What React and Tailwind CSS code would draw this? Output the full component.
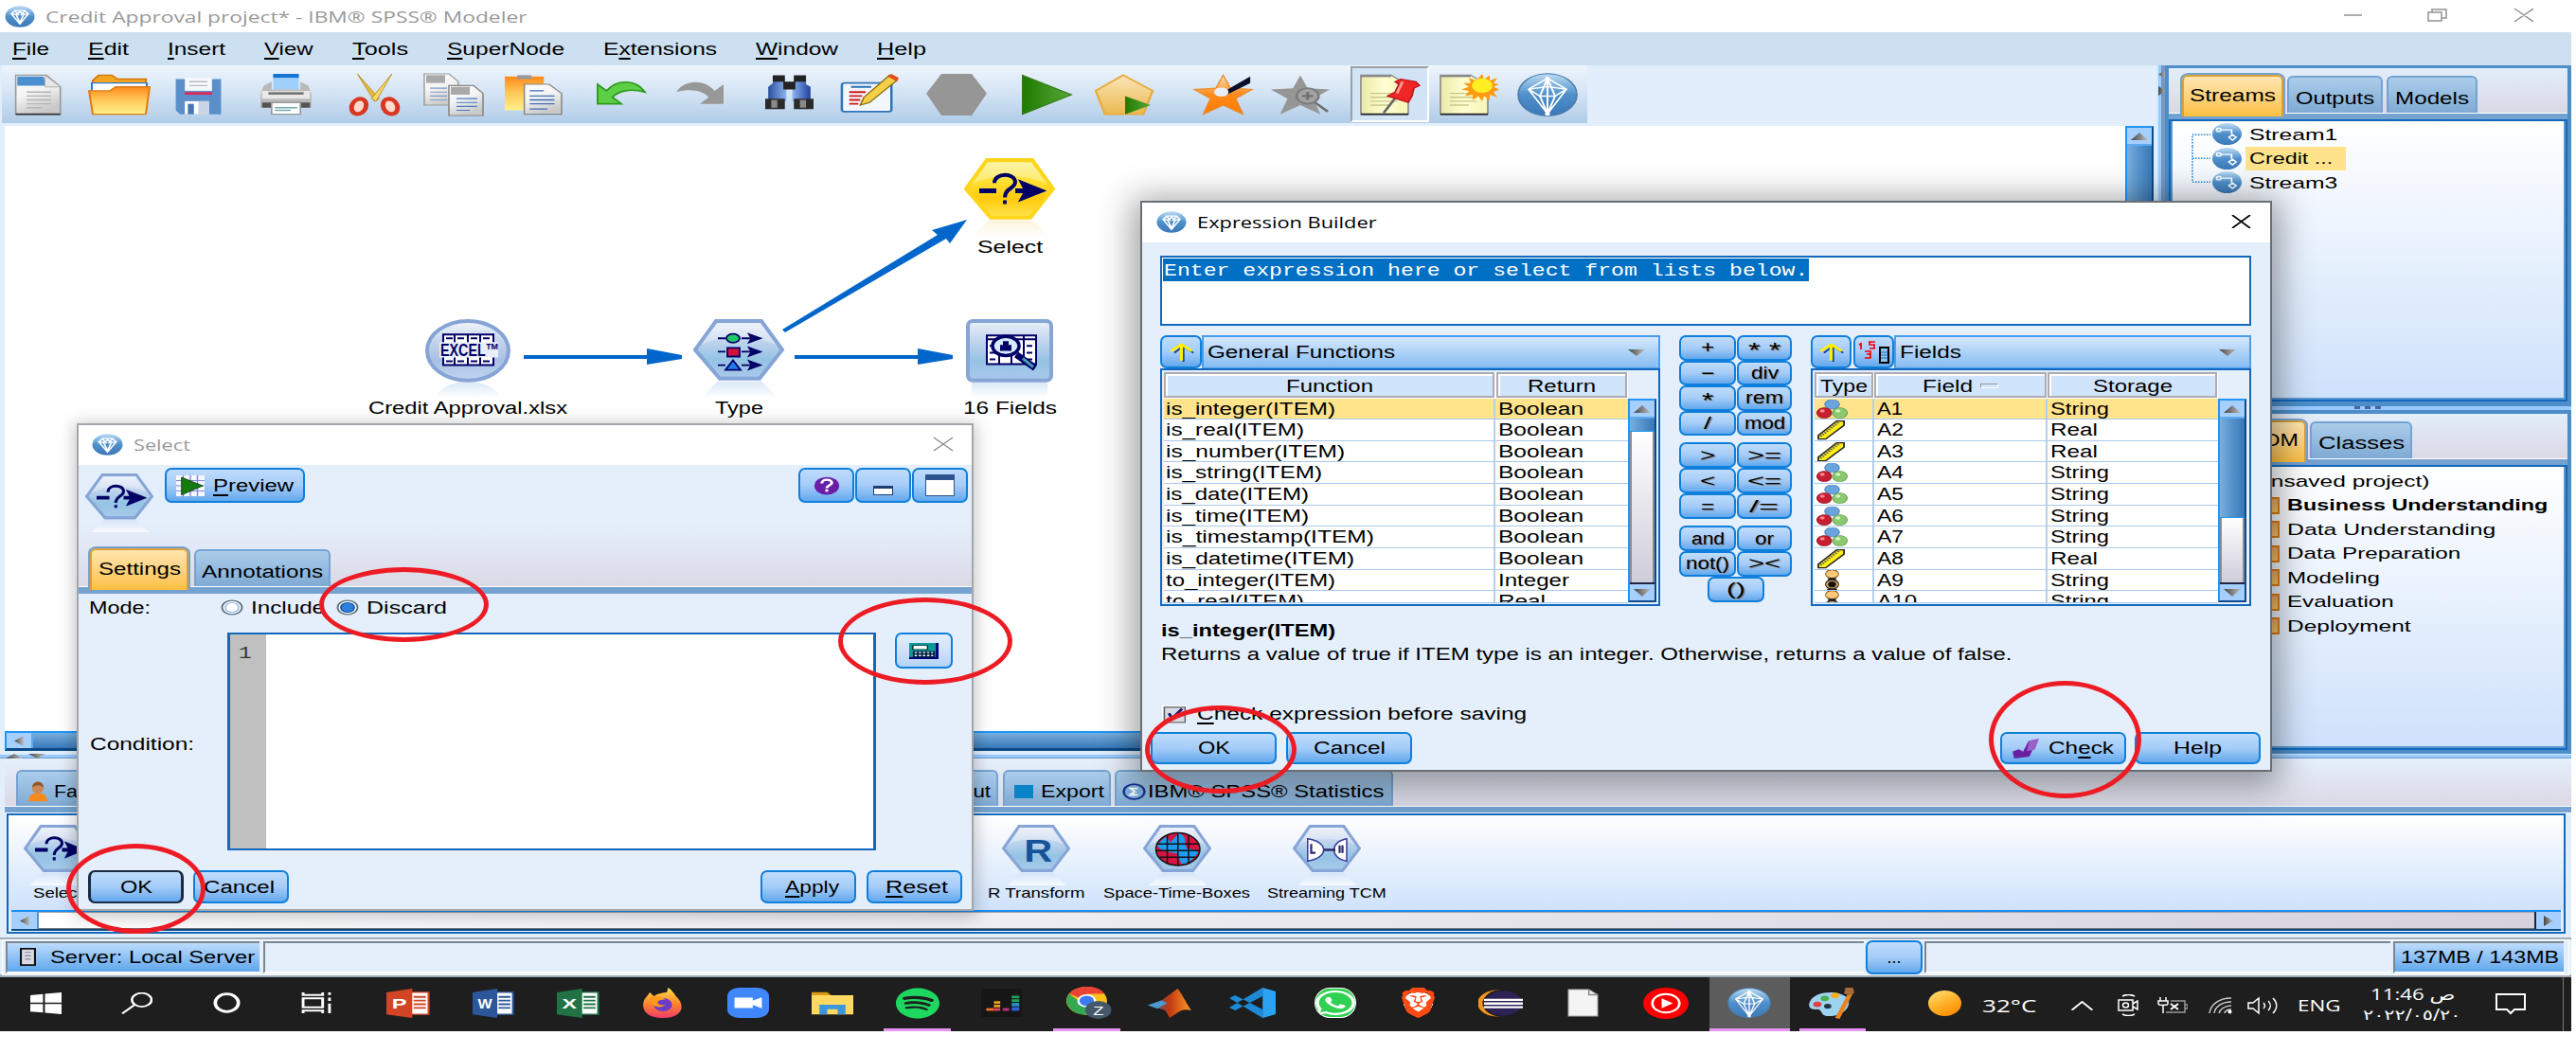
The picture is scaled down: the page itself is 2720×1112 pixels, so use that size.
import React, { useLayoutEffect, useRef } from "react";
import { FaSpotify, FaWhatsapp } from "react-icons/fa";
import { SiBrave } from "react-icons/si";

const UI = "font-['Liberation_Sans',Arial,sans-serif] text-[18px] ";
const BTN =
  "flex items-center justify-center border-2 border-[#0f7fdc] rounded-[7px] bg-gradient-to-b from-[#bfdcfc] via-[#a5ccf8] to-[#62a8ed] ";

/* Text stretched horizontally to a fixed width. */
function T({ w, className = "", children }) {
  const ref = useRef(null);
  useLayoutEffect(() => {
    const el = ref.current;
    el.style.transform = `scaleX(${w / el.offsetWidth})`;
  });
  return (
    <span className={"block shrink-0 leading-none " + className} style={{ width: w }}>
      <span ref={ref} className="inline-block origin-left whitespace-nowrap leading-none">
        {children}
      </span>
    </span>
  );
}

const U = ({ children }) => <span className="underline underline-offset-[3px] decoration-[1.5px]">{children}</span>;

function Pic({ className = "", vb = "0 0 32 32", children, style }) {
  return (
    <svg viewBox={vb} preserveAspectRatio="none" className={"block shrink-0 " + className} style={style}>
      {children}
    </svg>
  );
}

function Defs() {
  const G = ({ id, stops, x2 = 0, y2 = 1 }) => (
    <linearGradient id={id} x1="0" y1="0" x2={x2} y2={y2}>
      {stops.map((s, i) => (
        <stop key={i} offset={i / (stops.length - 1)} stopColor={s} />
      ))}
    </linearGradient>
  );
  return (
    <svg className="absolute h-0 w-0">
      <defs>
        <G id="node" stops={["#e9f0fa", "#c3d5ee", "#94c3e4", "#a9c8ea"]} />
        <G id="excel" stops={["#f4f7fc", "#c5d4eb", "#a8c0e4", "#c2d6f2"]} />
        <G id="gold" stops={["#f6f08a", "#ffe33a", "#ffc90c", "#ffe450"]} />
        <G id="refl" stops={["#cfe2f6", "#ffffff"]} />
        <G id="reflY" stops={["#fdf0cf", "#ffffff"]} />
        <G id="folder" stops={["#ff8a1c", "#ffc95c", "#fff08a"]} />
        <G id="page" stops={["#ffffff", "#f4f4f4", "#c9c9c9"]} x2={0.4} />
        <G id="green" stops={["#1f7a00", "#58a838"]} x2={1} y2={0} />
        <G id="penta" stops={["#fbe5b8", "#eab84e"]} />
        <G id="star" stops={["#ffe2bd", "#ff8a1a", "#ff7b05"]} />
        <G id="ball" stops={["#bcdcf4", "#4f90cb", "#3c78b8"]} />
        <G id="bino" stops={["#2d4f9c", "#9cc4ff", "#20429a"]} x2={1} y2={0} />
        <G id="note" stops={["#e9e9a8", "#ffffd2", "#f5f5b5"]} x2={1} y2={0} />
        <G id="sun" stops={["#ffe680", "#ffb833", "#ff8f00"]} x2={0.6} />
        <G id="fox" stops={["#ffe14d", "#ff8a2a", "#f03a6a"]} />
        <G id="mat" stops={["#2a5a8a", "#c23a12", "#ff9a2a"]} x2={1} y2={0} />
        <G id="tri" stops={["#444444", "#bdbdbd"]} x2={1} y2={0} />
      </defs>
    </svg>
  );
}

/* ---------- logos ---------- */
const Logo = ({ className }) => (
  <Pic className={className}>
    <ellipse cx="16" cy="16" rx="15.5" ry="15.5" fill="url(#ball)" />
    <g fill="none" stroke="#fff" strokeWidth="1.7">
      <path d="M7 12 11 7h10l4 5-9 15zM7 12l5 1 4 12 4-12 5-1M11 8l4 6M21 8l-4 6M12 13l4-4 4 4" />
    </g>
  </Pic>
);
const Diamond = ({ className }) => (
  <Pic className={className}>
    <ellipse cx="16" cy="16" rx="15.5" ry="15.5" fill="url(#ball)" stroke="#4a7cab" strokeWidth=".8" />
    <g fill="none" stroke="#fff" strokeWidth="1">
      <path d="M16 3v28M6 12 16 4l10 8-10 18zM6 12l6 5 4 13 4-13 6-5M12 17h8l-4-13zM6 12l10-2 10 2" />
    </g>
    <circle cx="16" cy="4" r="1.3" fill="#fff" />
    <circle cx="16" cy="30" r="1.3" fill="#fff" />
  </Pic>
);

/* ---------- toolbar ---------- */
const Page = ({ x = 0, y = 0, s = 1, head = "#4a8fd0" }) => (
  <g transform={`translate(${x} ${y}) scale(${s})`}>
    <path d="M1 1h20l9 9v21H1z" fill="url(#page)" stroke="#999" strokeWidth="1" />
    <path d="M2 2h17l2 7H2z" fill={head} />
    <path d="M20 1v9h10z" fill="#e8e8e8" stroke="#aaa" strokeWidth=".6" />
    <path d="M8 14h16M8 17h16M8 20h16M8 23h16M8 26h10" stroke="#b5b5b5" strokeWidth="1" />
    <path d="M1 31h29" stroke="#333" strokeWidth="1.2" />
  </g>
);
const STAR = "M16 1l4 10 12 1-9 7 4 12-11-7-11 7 4-12-9-7 12-1z";

const tools = [
  [15, 52, <Page key="p" />],
  [27, 64, <g key="o"><path d="M2 5 5 1h7l3 3h15v26H2z" fill="#f5a520" stroke="#d27708" /><path d="M1.500 7h29v10H1.500z" fill="#fff" stroke="#2a7bd0" /><path d="M0 13h11l3-3h18l-2 21H2z" fill="url(#folder)" stroke="#e07b10" /></g>],
  [26, 51, <g key="s"><path d="M1 4h30v27H4L1 28z" fill="#5a8fca" /><path d="M7 3h18v10H7z" fill="#f4f8ff" /><path d="M7 14h18v2H7z" fill="#e02858" /><path d="M10 6h12M10 9h12" stroke="#bbb" /><path d="M7 21h16v10H7z" fill="#fff" /><path d="M9 23h4v8H9z" fill="#4676b4" /><path d="M16 21h7v10h-7z" fill="#c9d4e4" /></g>],
  [40, 54, <g key="pr"><path d="M8 0h16v12H8z" fill="#9fd0fb" /><path d="M8 0h16v3H8z" fill="#1673d2" /><path d="M2 9l5-3v6h18V6l5 3 2 7v10H0V16z" fill="#b9b9b9" /><path d="M1 13h30v6H1z" fill="#e8e8e8" /><path d="M5 14h22v2H5z" fill="#777" /><path d="M1 22h30v4H1z" fill="#555" /><path d="M7 22h18v9H7z" fill="#fff" stroke="#999" /><path d="M9 26h14M9 28h10" stroke="#7aa" /></g>],
  [40, 53, <g key="c"><path d="M5 0 19 19l-3 2Z" fill="#e9b93c" stroke="#b58a1c" strokeWidth=".6" /><path d="M27 0 14 19l3 2Z" fill="#f8d96a" stroke="#b58a1c" strokeWidth=".6" /><ellipse cx="6" cy="25" rx="4.500" ry="6" transform="rotate(20 6 25)" fill="#ffd9d0" stroke="#d8361e" strokeWidth="3" /><ellipse cx="26" cy="25" rx="4.500" ry="6" transform="rotate(-20 26 25)" fill="#ffd9d0" stroke="#d8361e" strokeWidth="3" /></g>],
  [26, 64, <g key="cp"><path d="M0 0h13l5 6v18H0z" fill="url(#page)" stroke="#999" strokeWidth=".7" /><path d="M1 1h10v6H1z" fill="#a9a9a9" /><path d="M3 11h9M3 14h9M3 17h9M3 20h9" stroke="#7c9cc8" strokeWidth=".9" /><path d="M13 9h13l5 6v17H13z" fill="url(#page)" stroke="#888" strokeWidth=".8" /><path d="M14 10h10v6H14z" fill="#a9a9a9" /><path d="M17 19h11M17 22h11M17 25h11M17 28h7" stroke="#4a7cc4" strokeWidth=".9" /></g>],
  [21, 60, <g key="pa"><path d="M0 2h22v26H0z" fill="url(#folder)" /><path d="M7 1h8v3H7z" fill="#999" /><path d="M11 8h14l7 7v16H11z" fill="url(#page)" stroke="#888" strokeWidth=".8" /><path d="M14 13h8M14 17h14M14 20h14M14 23h14M14 27h10" stroke="#3f6fb8" strokeWidth="1" /></g>],
  [38, 50, <path key="u" d="M0 8v15h16l-6-5c4-5 12-7 22-4C26 4 13 4 6 13z" fill="#5ccf45" stroke="#2b9a1e" strokeWidth="1.200" />],
  [33, 50, <path key="r" d="M32 8v15H16l6-5c-4-5-12-7-22-4C6 4 19 4 26 13z" fill="#989898" />],
  [44, 51, <g key="b"><path d="M5 2h8v6l1 1v12H2V10l3-3zM19 2h8v6l3 2v11H18V9l1-1z" fill="url(#bino)" /><path d="M5 1h8v5H5zM19 1h8v5h-8zM12 6h8v6h-8z" fill="#222" /><path d="M0 19h13v8H0zM19 19h13v8H19z" fill="#2b2b2b" /><path d="M4 20h4v6H4zM23 20h4v6h-4z" fill="#8a8a8a" /></g>],
  [28, 62, <g key="e"><rect x="1" y="7" width="27" height="22" rx="1.500" fill="#f2f7fd" stroke="#2f74b8" strokeWidth="1.300" /><path d="M6 10h11" stroke="#2f74b8" strokeWidth="1.500" /><path d="M5 14h9M5 17h7M5 20h6M5 23h5" stroke="#d01818" strokeWidth="1.300" /><path d="M27 1l4 4-15 17-5 2 2-6z" fill="#f4d048" stroke="#8a6a10" strokeWidth=".8" /><path d="M26 2l2-2 4 3-1 3z" fill="#e0501c" /></g>],
  [29, 64, <path key="h" d="M8 0h16l8 15-8 17H8L0 15z" fill="#969696" />],
  [36, 55, <path key="pl" d="M1 1 31 16 1 31z" fill="url(#green)" stroke="#2d7a12" strokeWidth=".8" />],
  [24, 62, <g key="pe"><path d="M15 1 31 13 26 31H5L0 13z" fill="url(#penta)" stroke="#e8ab3c" strokeWidth="1.200" /><path d="M16 17 30 24 16 31z" fill="url(#green)" /></g>],
  [42, 61, <g key="sb"><path d={STAR} fill="url(#star)" stroke="#ea8c2a" strokeWidth=".8" /><path d="M31 2v5L18 16l-2-2z" fill="#0a0d2c" /><ellipse cx="15" cy="14" rx="4" ry="3.500" fill="#e8eef5" /></g>],
  [20, 62, <g key="sg"><path d={STAR} fill="#969696" /><circle cx="20" cy="17" r="6" fill="#a2a2a2" stroke="#7c7c7c" strokeWidth="1.300" /><path d="M17 17h6M20 14v6M24 22l7 7" stroke="#707070" strokeWidth="1.600" /></g>],
];
const Note = () => (
  <g>
    <path d="M1 1h16l9 8v22H1z" fill="url(#note)" stroke="#888" strokeWidth=".8" />
    <path d="M1 1h16v1.500H1z" fill="#888" />
    <path d="M6 15h14M6 18h14M6 21h14M6 24h10" stroke="#c9c78a" />
    <path d="M1 31h25" stroke="#222" strokeWidth="1.300" />
  </g>
);
const Tool = ({ gap, w, children }) => (
  <div className="h-[44px] shrink-0" style={{ marginLeft: gap, width: w }}>
    <Pic className="h-full w-full overflow-visible">{children}</Pic>
  </div>
);

function Toolbar() {
  return (
    <div className="flex h-[61px] items-center w-[1674px] ml-[2px] bg-gradient-to-b from-[#eef5fd] via-[#d3e3f4] to-[#b0cce8]">
      {tools.map(([g, w, el], i) => (
        <Tool key={i} gap={i ? g : g - 2} w={w}>
          {el}
        </Tool>
      ))}
      <div className="ml-[22px] flex h-[59px] w-[83px] items-center border-2 border-l-[#9a9fa8] border-t-[#9a9fa8] border-b-white border-r-white bg-[#d2e3f6]">
        <Tool gap={7} w={64}>
          <Note />
          <path d="M13 30 20 17" stroke="#666" strokeWidth="1.500" />
          <path d="M22 4l8 2 2 3-3 2-1 6-2 5-11-5 4-3 2-6-2-2z" fill="#ef2626" stroke="#b81414" strokeWidth=".8" />
          <path d="M23 6l-3 9" stroke="#ff9a9a" strokeWidth="1.500" />
        </Tool>
      </div>
      <Tool gap={10} w={64}>
        <Note />
        <path d="M23 0l1 4 3-3v4l4-2-2 4 3 1-3 2 3 2-3 2 2 4-4-2v4l-3-3-1 4-2-4-3 3 0-4-4 1 2-4-4-1 4-2-3-3 4 0-1-4 4 2z" fill="#ff9a12" />
        <circle cx="23" cy="9" r="5.500" fill="#ffee22" />
      </Tool>
      <Diamond className="ml-[19px] h-[46px] w-[64px]" />
    </div>
  );
}

/* ---------- shared parts ---------- */
const Tri = ({ d = "up", className = "" }) => (
  <Pic className={"h-[8px] w-[18px] " + className} vb="0 0 10 10">
    <path d={{ up: "M0 10 5 0 10 10z", down: "M0 0 5 10 10 0z", left: "M10 0 0 5 10 10z", right: "M0 0 10 5 0 10z" }[d]} fill="url(#tri)" />
  </Pic>
);

const SB = "flex shrink-0 items-center justify-center bg-[#a5cfff] ";
const VScroll = ({ thumb, className = "" }) => (
  <div className={"flex flex-col border-2 border-t-[#2196f8] border-l-[#2196f8] border-r-[#0b4a86] border-b-[#0b4a86] " + className}>
    <div className={SB + "h-[19px] border-b-2 border-[#5fa8f2]"}><Tri /></div>
    <div className="shrink-0 border-b border-[#2196f8] bg-gradient-to-r from-[#78b0de] via-[#5592cb] to-[#3878b8]" style={{ height: thumb }} />
    <div className="flex-1 border-x-2 border-[#8c8c96] bg-gradient-to-b from-white to-[#cfccda]" />
    <div className={SB + "h-[19px] border-t-2 border-[#222244]"}><Tri d="down" /></div>
  </div>
);

const Tab = ({ w, tw, on, h = 39, className = "", children }) => (
  <div
    className={
      UI + "z-10 flex shrink-0 items-center justify-center rounded-t-[6px] border-2 border-b-0 " +
      (on ? "relative top-[4px] border-[#d9a036] bg-gradient-to-b from-[#ffe6b0] to-[#fcbf3c] pb-[3px] shadow-[0_-2px_0_0_#74a3d1,2px_-1px_0_0_#74a3d1,-2px_-1px_0_0_#74a3d1] " : "border-[#74a3d1] bg-gradient-to-b from-[#abcdeb] to-[#7faad4] pt-[6px] ") +
      className
    }
    style={{ width: w, height: h }}
  >
    <T w={tw}>{children}</T>
  </div>
);

const SideTabs = ({ children }) => (
  <>
    <div className="flex h-[47px] items-end gap-[4px] bg-gradient-to-b from-[#e2eefa] to-[#dad9e5] pl-[14px]">{children}</div>
    <div className="h-[7px] border-t border-white bg-[#74a3d1]" />
  </>
);

const StreamIcon = () => (
  <Pic className="h-[23px] w-[31px]">
    <ellipse cx="16" cy="16" rx="16" ry="16" fill="url(#ball)" />
    <path d="M8 10h13v6M22 17l4 4-4 4-4-4z" fill="none" stroke="#fff" strokeWidth="1.800" />
    <circle cx="7" cy="10" r="2.500" fill="#8fc0e8" stroke="#fff" strokeWidth="1.500" />
  </Pic>
);

function Hex({ gold, className, children, refl = true }) {
  return (
    <Pic className={className} vb="0 0 96 82">
      {refl && <path d="M26 65h46l18 17H8z" fill={gold ? "url(#reflY)" : "url(#refl)"} opacity=".8" />}
      <path d="M24 2h48l22 30-24 30H28L2 32z" fill={gold ? "url(#gold)" : "url(#node)"} stroke={gold ? "#ffd51c" : "#86a5d6"} strokeWidth="4" />
      <path d="M25 5h46l17 22C66 16 30 16 8 27z" fill="#fff" opacity=".3" />
      {children}
    </Pic>
  );
}
const SelectGlyph = () => (
  <g stroke="#000066" fill="none">
    <path d="M16 34h18M54 34h26" strokeWidth="5" />
    <path d="M58 23 86 34 58 45l6-11z" fill="#000066" strokeWidth="1" />
    <path d="M32 26c0-11 22-11 22-1 0 7-11 6-11 16M43 44v4" strokeWidth="4" />
  </g>
);

/* ---------- stream canvas ---------- */
function Node({ x, y, label, lw, children }) {
  return (
    <div className={UI + "absolute flex w-[240px] flex-col items-center gap-[2px]"} style={{ left: x - 120, top: y }}>
      {children}
      <T w={lw}>{label}</T>
    </div>
  );
}

function Canvas() {
  return (
    <div className="relative h-full w-[2239px] overflow-hidden bg-white">
      <svg className="absolute left-0 top-0 h-[400px] w-[1200px]" viewBox="5 133 1200 400">
        <g fill="#0066cc">
          <path d="M553 375h130v-7l37 7v4l-37 6v-6H553zM839 375h130v-7l37 7v4l-37 6v-6H839z" />
          <path d="M826 348 990 248l-6-5 37-11-18 25-4-5L829 351z" />
        </g>
      </svg>
      <Node x={1061} y={34} label="Select" lw={69}>
        <Hex gold className="h-[83px] w-[96px]"><SelectGlyph /></Hex>
      </Node>
      <Node x={489} y={204} label="Credit Approval.xlsx" lw={210}>
        <Pic className="h-[83px] w-[90px]" vb="0 0 90 82">
          <path d="M12 82C16 60 74 60 78 82z" fill="url(#refl)" opacity=".8" />
          <ellipse cx="45" cy="33" rx="43" ry="31" fill="url(#excel)" stroke="#86a5d6" strokeWidth="4" />
          <path d="M19 16h53v32H19z" fill="#fff" stroke="#000066" strokeWidth="2" />
          <path d="M31 16v32M45 16v32M58 16v32M22 20h7M34 20h7M48 20h7M61 20h7M22 44h7M34 44h7M48 44h7M61 44h7" stroke="#000066" strokeWidth="2" />
          <rect x="15" y="24" width="62" height="16" fill="#e9effa" />
          <text x="16" y="39" textLength="62" lengthAdjust="spacingAndGlyphs" fontFamily="Liberation Sans" fontWeight="700" fontSize="19" fill="#000066">EXCEL™</text>
        </Pic>
      </Node>
      <Node x={775} y={204} label="Type" lw={51}>
        <Hex className="h-[83px] w-[96px]">
          <g stroke="#000066" strokeWidth="1.800">
            <path d="M26 20h8M51 20h14M26 34h8M51 34h14M26 48h8M51 48h14" />
            <path d="M58 15 72 20 58 25l3-5zM58 29l14 5-14 5 3-5zM58 43l14 5-14 5 3-5z" fill="#000066" strokeWidth="1" />
            <ellipse cx="42" cy="20" rx="7" ry="4.500" fill="#21c96a" />
            <path d="M36 30h13v9H36z" fill="#d4103c" />
            <path d="M42 43l8 10H34z" fill="#1d7cf0" />
          </g>
        </Hex>
      </Node>
      <Node x={1061} y={204} label="16 Fields" lw={99}>
        <Pic className="h-[83px] w-[92px]" vb="0 0 92 82">
          <path d="M6 66h80v16H6z" fill="url(#refl)" opacity=".8" />
          <rect x="2" y="2" width="88" height="62" rx="5" fill="url(#node)" stroke="#86a5d6" strokeWidth="4" />
          <path d="M22 17h52v30H22z" fill="#fff" stroke="#000066" strokeWidth="2" />
          <path d="M22 21h52M35 17v30M61 17v30M48 17v30M25 28h6M25 35h6M25 42h6M64 28h6M64 35h6M64 42h6" stroke="#000066" strokeWidth="2" />
          <ellipse cx="42" cy="28" rx="14" ry="10" fill="#d6ecfa" stroke="#000066" strokeWidth="3.500" />
          <path d="M36 33v-6h3v-4h6v4h3v6z" fill="#000066" />
          <path d="M53 37 73 51" stroke="#000066" strokeWidth="7" />
          <path d="M60 41 71 50" stroke="#4a9ab8" strokeWidth="3" />
        </Pic>
      </Node>
    </div>
  );
}

function SideTree() {
  return (
    <div className={UI + "flex h-[298px] flex-col border-2 border-[#1268bd]"}>
      <div className="flex flex-1 flex-col border-x-2 border-b-2 border-[#5a96cf] bg-gradient-to-b from-white to-[#cfe2fb] pt-[1px]">
        {[["Stream1", 93], ["Credit ...", 88], ["Stream3", 93]].map(([l, w], i) => (
          <div key={l} className="flex h-[25.500px] shrink-0 items-center">
            <Pic className="ml-[20px] h-full w-[22px]" vb="0 0 22 25">
              <path d={i === 0 ? "M1 25V13H20" : i === 1 ? "M1 0V25M1 12H20" : "M1 0V12H20"} fill="none" stroke="#2080e0" strokeWidth="1.500" strokeDasharray="1.500 1.500" />
            </Pic>
            <StreamIcon />
            <div className={"ml-[4px] flex h-full items-center pl-[4px] pt-[1px] " + (i === 1 ? "w-[106px] bg-[#ffe38c]" : "")}>
              <T w={w} className="text-[17px]">{l}</T>
            </div>
          </div>
        ))}
      </div>
    </div>
  );
}

const phases = [["Business Understanding", 275], ["Data Understanding", 220], ["Data Preparation", 184], ["Modeling", 98], ["Evaluation", 112], ["Deployment", 131]];

function SideColumn() {
  return (
    <div className="flex w-[429px] flex-col bg-[#4d8ec9]">
      <div className="h-[360px] px-[4px] pt-[3px]">
        <SideTabs>
          <Tab on w={107} tw={91} h={44}>Streams</Tab>
          <Tab w={101} tw={83}>Outputs</Tab>
          <Tab w={96} tw={78}>Models</Tab>
        </SideTabs>
        <SideTree />
      </div>
      <div className="flex h-[4px] items-center justify-center gap-[5px] bg-[#99c9ff] pr-[2px]">
        <i className="h-[3px] w-[6px] bg-[#47639f]" /><i className="h-[3px] w-[6px] bg-[#47639f]" /><i className="h-[3px] w-[6px] bg-[#47639f]" />
      </div>
      <div className="h-[363px] px-[4px] pt-[4px]">
        <SideTabs>
          <Tab on w={131} tw={115} h={44}>CRISP-DM</Tab>
          <Tab w={108} tw={91}>Classes</Tab>
        </SideTabs>
        <div className={UI + "flex h-[301px] flex-col border-2 border-[#1268bd]"}>
          <div className="flex-1 border-x-2 border-b-2 border-[#5a96cf] bg-gradient-to-b from-white to-[#cfe2fb] pt-[3px]">
            <div className="flex h-[25.500px] items-center pl-[82px]"><T w={189} className="text-[17px]">(unsaved project)</T></div>
            {phases.map(([l, w], i) => (
              <div key={l} className="flex h-[25.500px] items-center pl-[84px]">
                <div className="h-[18px] w-[29px] border-2 border-[#e07a12] bg-gradient-to-b from-[#e9a868] to-[#f8c860]" />
                <T w={w} className={"ml-[8px] text-[17px] " + (i === 0 ? "font-bold" : "")}>{l}</T>
              </div>
            ))}
          </div>
        </div>
      </div>
      <div className="h-px bg-[#4d8ec9]" />
    </div>
  );
}

/* ---------- bottom palette ---------- */
const PTab = ({ w, className = "", children }) => (
  <div className={"flex h-[38px] shrink-0 items-center rounded-t-[6px] border-2 border-b-0 border-[#74a3d1] bg-gradient-to-b from-[#abcdeb] to-[#7faad4] pt-[5px] " + className} style={{ width: w }}>
    {children}
  </div>
);
const PItem = ({ w, lw, label, ml, children }) => (
  <div className="flex shrink-0 flex-col items-center" style={{ width: w, marginLeft: ml }}>
    <Hex className="h-[64px] w-[72px]">{children}</Hex>
    <T w={lw} className="text-[15px]">{label}</T>
  </div>
);

function Palette() {
  return (
    <div className={UI + "bg-[#e2eefb]"}>
      <div className="flex h-[5px] items-center gap-[6px] border-t border-b border-t-[#d5ecff] border-b-[#6f9fd0] bg-[#99c9ff] pl-[6px]">
        <Tri className="!h-[5px]" /><Tri d="down" className="!h-[5px]" />
      </div>
      <div className="ml-[5px] flex h-[50px] items-end bg-gradient-to-b from-[#e6f0fb] to-[#dad9e5] pl-[12px]">
        <PTab w={130} className="pl-[9px]">
          <Pic className="h-[22px] w-[24px]">
            <path d="M3 31c0-10 5-13 13-13s13 3 13 13z" fill="#f58a1c" /><ellipse cx="16" cy="10" rx="8" ry="9.500" fill="#c98a58" /><path d="M8 10c0-12 16-12 16 0-4-5-12-5-16 0z" fill="#8a5a2c" />
          </Pic>
          <T w={88} className="ml-[5px]">Favorites</T>
        </PTab>
        <div className="w-[787px]" />
        <PTab w={120} className="justify-end pr-[6px]"><T w={67}>Output</T></PTab>
        <PTab w={114} className="ml-[5px] pl-[10px]"><i className="mr-[8px] h-[14px] w-[20px] bg-[#0a84c8]" /><T w={67}>Export</T></PTab>
        <PTab w={294} className="ml-[4px] pl-[6px]">
          <Pic className="h-[18px] w-[25px]"><circle cx="16" cy="16" r="14" fill="#7fb4e2" stroke="#1a2f8c" strokeWidth="3" /><path d="M21 10H11l6 6-6 6h10" fill="none" stroke="#fff" strokeWidth="3" /></Pic>
          <T w={250} className="ml-[2px]">IBM® SPSS® Statistics</T>
        </PTab>
      </div>
      <div className="ml-[5px] h-[8px] border-b border-t border-white bg-[#74a3d1]" />
      <div className="ml-[7px] mr-[6px] border-2 border-[#1268bd]">
        <div className="flex h-[100px] items-start bg-gradient-to-b from-white to-[#cfe2fb] pt-[10px]">
          <PItem w={72} ml={16} lw={52} label="Select"><SelectGlyph /></PItem>
          <PItem w={104} ml={945} lw={103} label="R Transform">
            <text x="31" y="50" textLength="40" lengthAdjust="spacingAndGlyphs" fontFamily="Liberation Sans" fontWeight="700" fontSize="42" fill="#16549a">R</text>
          </PItem>
          <PItem w={155} ml={19} lw={155} label="Space-Time-Boxes">
            <ellipse cx="49" cy="33" rx="31" ry="22" fill="#d41442" stroke="#111" strokeWidth="2" />
            <path d="M50 12c14 4 6 12 12 20l16 3c-4 10-14 18-24 18l-6-14-20-4-8-6c3-6 8-11 14-13l4 8z" fill="#1b9cf0" />
            <path d="M20 26h58M18 35h62M24 44h50M34 14v38M49 12v42M64 14v38" stroke="#111" strokeWidth="2" fill="none" />
          </PItem>
          <PItem w={126} ml={18} lw={126} label="Streaming TCM">
            <path d="M21 19c30 4 30 26 0 30zM76 19c-24 4-24 26 0 30z" fill="#fff" stroke="#3a3aa0" strokeWidth="2" />
            <path d="M44 34h16M26 26v12h6M66 28v10M70 28v10" stroke="#2a2a6a" strokeWidth="3" fill="none" />
          </PItem>
        </div>
        <div className="mx-[3px] flex h-[22px] items-stretch border-b-2 border-t-2 border-b-[#0b4a86] border-t-[#1a8ef7]">
          <div className={SB + "w-[29px] border-r-2 border-[#5a90c8]"}><Tri d="left" className="!h-[11px] !w-[10px]" /></div>
          <div className="flex-1 border-b border-t border-b-[#777] border-t-[#a9a9b0] bg-gradient-to-r from-white to-[#d5d2de]" />
          <div className={SB + "w-[28px] border-l-2 border-[#222244]"}><Tri d="right" className="!h-[11px] !w-[10px]" /></div>
        </div>
        <div className="h-px bg-white" />
      </div>
      <div className="h-[4px]" />
    </div>
  );
}

function StatusBar() {
  const CELL = "flex h-[34px] items-center border-l-2 border-t-2 border-[#7d8690] border-b-2 border-b-white ";
  return (
    <div className={UI + "flex h-[42px] items-center border-b-[3px] border-t-2 border-[#a0abb6] bg-[#e4effb] px-[6px] outline outline-1 -outline-offset-[3px] outline-white"}>
      <div className={CELL + "w-[268px] bg-gradient-to-b from-[#bddcfd] to-[#5fa6ec]"}>
        <Pic className="ml-[13px] h-[19px] w-[17px]"><path d="M2 1h28v30H2z" fill="#dcdce8" stroke="#111" strokeWidth="4" /><path d="M10 8h12M10 14h12M10 20h12" stroke="#888" strokeWidth="2" /></Pic>
        <T w={216} className="ml-[15px]">Server: Local Server</T>
      </div>
      <div className={CELL + "ml-[4px] w-[1690px]"} />
      <div className={BTN + "ml-[2px] h-[36px] w-[60px]"}><T w={15}>...</T></div>
      <div className={CELL + "ml-[2px] w-[492px]"} />
      <div className={CELL + "ml-[3px] w-[180px] bg-gradient-to-b from-[#bddcfd] to-[#5fa6ec] pl-[6px]"}><T w={167}>137MB / 143MB</T></div>
    </div>
  );
}

/* ---------- select dialog ---------- */
const Radio = ({ on }) => (
  <Pic className="h-[17px] w-[24px]">
    <circle cx="16" cy="16" r="14" fill="#fff" stroke="#5d7080" strokeWidth="2.500" />
    <circle cx="16" cy="16" r="9.500" fill={on ? "#2f80dc" : "#fff"} stroke={on ? "#0c4c9c" : "#8ab4e0"} strokeWidth="2" />
  </Pic>
);

function SelectDialog() {
  return (
    <div className={UI + "absolute left-[81px] top-[447px] z-20 flex h-[515px] w-[947px] flex-col border-2 border-[#a3a7ab] bg-[#e4effb] shadow-[0_3px_16px_3px_rgba(0,0,0,0.22)]"}>
      <div className="flex h-[42px] shrink-0 items-center bg-white pb-[2px] pl-[14px] pr-[19px] font-['Open_Sans',sans-serif] text-[#999]">
        <Logo className="h-[23px] w-[33px]" />
        <T w={60} className="ml-[11px] text-[17px]">Select</T>
        <Pic className="ml-auto h-[16px] w-[22px]" vb="0 0 22 16"><path d="M1 1l20 14M21 1 1 15" stroke="#888" strokeWidth="1.300" /></Pic>
      </div>
      <div className="flex h-[87px] shrink-0 items-start bg-gradient-to-b from-[#e4effb] from-70% to-[#e2e8f5] pt-[3px]">
        <Hex className="ml-[7px] mt-[6px] h-[62px] w-[72px]"><SelectGlyph /></Hex>
        <div className={BTN + "ml-[12px] h-[37px] w-[148px]"}>
          <Pic className="h-[22px] w-[30px]"><path d="M0 0h32v32H0z" fill="#f4f8ff" /><path d="M0 8h32M0 16h32M0 24h32M8 0v32M16 0v32M24 0v32" stroke="#8088d8" strokeWidth="1.500" /><path d="M6 3 30 16 6 30z" fill="#157a10" stroke="#0c3c08" /></Pic>
          <T w={85} className="ml-[9px]"><U>P</U>review</T>
        </div>
        <div className="ml-auto mr-[4px] flex gap-[1px]">
          <div className={BTN + "h-[37px] w-[59px]"}>
            <Pic className="h-[20px] w-[28px]"><circle cx="16" cy="16" r="15" fill="#6a1ea8" /><path d="M10 12c0-8 12-8 12-1 0 4-6 4-6 9M16 22v4" fill="none" stroke="#fff" strokeWidth="3.500" /></Pic>
          </div>
          <div className={BTN + "h-[37px] w-[59px] pt-[10px]"}><i className="h-[10px] w-[21px] border border-t-[3px] border-[#1f3f73] bg-white" /></div>
          <div className={BTN + "h-[37px] w-[59px]"}><i className="h-[23px] w-[31px] border border-t-[6px] border-[#2c5590] bg-white" /></div>
        </div>
      </div>
      <div className="flex h-[41px] shrink-0 items-end gap-[6px] bg-gradient-to-b from-[#e2e8f5] to-[#dad9e5] pl-[12px]">
        <Tab on w={104} tw={87} h={44}>Settings</Tab>
        <Tab w={144} tw={128}>Annotations</Tab>
      </div>
      <div className="h-[8px] shrink-0 border-t border-white bg-[#74a3d1]" />
      <div className="flex h-[28px] shrink-0 items-center pl-[11px] pt-[1px]">
        <T w={65}>Mode:</T>
        <div className="ml-[74px]"><Radio /></div>
        <T w={78} className="ml-[8px]">Include</T>
        <div className="ml-[12px]"><Radio on /></div>
        <T w={85} className="ml-[8px]">Discard</T>
      </div>
      <div className="mt-[13px] flex h-[230px] shrink-0 pl-[12px]">
        <div className="flex w-[145px] items-center pt-[5px]"><T w={110}>Condition:</T></div>
        <div className="flex w-[685px] border-[3px] border-y-2 border-[#1268bd] bg-white">
          <div className="w-[38px] bg-[#c0c0c0] pl-[9px] pt-[11px]"><T w={14} className="font-['Liberation_Mono',monospace] text-[18px] text-[#333]">1</T></div>
        </div>
        <div className={BTN + "ml-[20px] h-[38px] w-[61px] !from-[#e0edfc] !via-[#cfe2fb] !to-[#b4d3f8]"}>
          <Pic className="h-[17px] w-[31px]"><path d="M0 0h32v32H0z" fill="#00007a" /><path d="M0 0h29v28H0z" fill="#0b9a98" /><path d="M4 5h16v8H4z" fill="#fff" stroke="#033" strokeWidth="1.500" /><path d="M4 16h24v13H4z" fill="#024" /><path d="M6 19h20M6 25h20" stroke="#fff" strokeWidth="2.500" strokeDasharray="2.500 2" /></Pic>
        </div>
      </div>
      <div className="mt-[21px] flex items-center pl-[10px] pr-[10px]">
        <div className={BTN + "h-[35px] w-[101px] border-[3px] !border-[#1a2a40] !border-y-2"}><T w={34}>OK</T></div>
        <div className={BTN + "ml-[10px] h-[35px] w-[101px] pr-1"}><T w={75}>Cancel</T></div>
        <div className={BTN + "ml-auto h-[35px] w-[101px] pl-2"}><T w={57}><U>A</U>pply</T></div>
        <div className={BTN + "ml-[11px] h-[35px] w-[101px] pl-1"}><T w={66}><U>R</U>eset</T></div>
      </div>
    </div>
  );
}

/* ---------- expression builder ---------- */
const edges = [420, 442, 465, 487, 510, 533, 555, 578, 601, 623, 636];
const rowH = (i) => edges[i + 1] - edges[i];
const funcs = [
  ["is_integer(ITEM)", 179, "Boolean", 90], ["is_real(ITEM)", 146, "Boolean", 90], ["is_number(ITEM)", 189, "Boolean", 90],
  ["is_string(ITEM)", 165, "Boolean", 90], ["is_date(ITEM)", 151, "Boolean", 90], ["is_time(ITEM)", 151, "Boolean", 90],
  ["is_timestamp(ITEM)", 220, "Boolean", 90], ["is_datetime(ITEM)", 199, "Boolean", 90], ["to_integer(ITEM)", 179, "Integer", 75], ["to_real(ITEM)", 146, "Real", 50],
];
const fields = [["A1", 27, "s"], ["A2", 28, "r"], ["A3", 28, "r"], ["A4", 28, "s"], ["A5", 28, "s"], ["A6", 28, "s"], ["A7", 28, "s"], ["A8", 28, "r"], ["A9", 28, "f"], ["A10", 42, "f"]];

const TypeIcon = ({ k }) =>
  k === "s" ? (
    <Pic className="h-[20px] w-[33px]"><ellipse cx="16" cy="8" rx="7.500" ry="8" fill="#6aa4dc" stroke="#4a80bc" /><ellipse cx="8" cy="22.500" rx="7.500" ry="9" fill="#c81e32" stroke="#901020" /><ellipse cx="24" cy="22.500" rx="7.500" ry="9" fill="#8cc870" stroke="#5a9a48" /><circle cx="6" cy="19" r="2.500" fill="#ff8a90" /><circle cx="22" cy="19" r="2.500" fill="#d4f4c4" /></Pic>
  ) : k === "r" ? (
    <Pic className="h-[21px] w-[31px]"><path d="M22 1h8v7L10 30H2v-6z" fill="#ffee10" stroke="#222" strokeWidth="1.800" /><path d="M24 3 4 26" stroke="#666" strokeWidth="3" strokeDasharray="2 1.500" /></Pic>
  ) : (
    <Pic className="ml-[8px] h-[22px] w-[17px]"><ellipse cx="16" cy="6" rx="13" ry="6.500" fill="#ffc878" stroke="#7a4a10" strokeWidth="1.500" /><path d="M8 12h16v4H8z" fill="#222" /><ellipse cx="16" cy="22" rx="13" ry="7" fill="#e8b060" stroke="#222" strokeWidth="2" /><ellipse cx="16" cy="22" rx="8" ry="4.500" fill="#111" /><path d="M6 29h20v3H6z" fill="#222" /></Pic>
  );

const Head = ({ w, tw, children, extra }) => (
  <div className="flex h-[27px] shrink-0 items-center justify-center border-2 border-[#acacb2] bg-[#d0e4fb] pt-[2px] shadow-[inset_2px_2px_0_#fff]" style={{ width: w }}>
    <T w={tw}>{children}</T>
    {extra}
  </div>
);
const UpArrow = () => (
  <Pic className="h-[20px] w-[27px]">
    <path d="M18.500 6v26M7 17 18 6 31 17" fill="none" stroke="#123a9c" strokeWidth="2.500" />
    <path d="M16 3v27M3 14 16 3 29 14" fill="none" stroke="#fff000" strokeWidth="3.800" />
  </Pic>
);
const Combo = ({ tw, children }) => (
  <div className="flex h-[35px] flex-1 items-center border-2 border-b border-[#4a9eee] bg-gradient-to-b from-[#d6e8fd] via-[#aed2f7] to-[#86bdf2] pl-[4px] pr-[14px]">
    <T w={tw}>{children}</T>
    <Tri d="down" className="ml-auto !h-[7px]" />
  </div>
);
const Op = ({ l, w, h, tw }) => (
  <div className={BTN + "[text-shadow:1px_1px_0_#8f8f8f] " + (l[0] === "*" ? "pt-[6px] text-[22px]" : "")} style={{ width: w, height: h }}><T w={tw}>{l}</T></div>
);
const opGroups = [
  [[["+", 15], ["* *", 34]], [["−", 15], ["div", 29]], [["*", 13], ["rem", 40]], [["/", 8], ["mod", 43]]],
  [[[">", 17], [">=", 36]], [["<", 17], ["<=", 36]], [["=", 15], ["/=", 32]]],
  [[["and", 35], ["or", 20]], [["not()", 46], ["><", 34]]],
];

function ExpressionBuilder() {
  return (
    <div className={UI + "absolute left-[1204px] top-[212px] z-20 flex h-[603px] w-[1195px] flex-col border-2 border-[#6b6f73] bg-[#e4effb] shadow-[0_6px_34px_8px_rgba(0,0,0,0.38)]"}>
      <div className="flex h-[42px] shrink-0 items-center bg-white pb-[2px] pl-[15px] pr-[20px] font-['Open_Sans',sans-serif]">
        <Logo className="h-[23px] w-[32px]" />
        <T w={190} className="ml-[11px] text-[17px]">Expression Builder</T>
        <Pic className="ml-auto h-[14px] w-[21px]" vb="0 0 21 14"><path d="M1 0l19 14M20 0 1 14" stroke="#000" strokeWidth="1.700" /></Pic>
      </div>
      <div className="ml-[19px] mt-[14px] h-[74px] w-[1152px] shrink-0 border-2 border-[#1268bd] bg-white p-[1px]">
        <div className="flex h-[24px] w-[682px] items-center bg-[#0070c4] pl-[1px] pt-[2px] text-white">
          <T w={680} className="font-['Liberation_Mono','Courier_New',monospace] text-[18px]">Enter expression here or select from lists below.</T>
        </div>
      </div>
      <div className="mt-[10px] flex shrink-0 pl-[19px]">
        <div className="w-[528px]">
          <div className="flex"><div className={BTN + "h-[35px] w-[44px]"}><UpArrow /></div><Combo tw={198}>General Functions</Combo></div>
          <div className="flex h-[251px] border-2 border-[#1268bd] bg-[#e4effb] p-[2px]">
            <div className="h-[245px] w-[490px] overflow-hidden">
              <div className="flex h-[28px] gap-[2px] bg-white"><Head w={349} tw={92}>Function</Head><Head w={138} tw={72}>Return</Head></div>
              {funcs.map(([f, w, r, rw], i) => (
                <div key={f} className={"flex items-start overflow-hidden border-b border-[#a9c8ea] " + (i ? "bg-white" : "bg-[#ffe48c]")} style={{ height: rowH(i) }}>
                  <div className="flex h-[22px] w-[350px] items-center border-r-2 border-[#b5cfeb] pl-[2px]"><T w={w}>{f}</T></div>
                  <div className="flex h-[22px] items-center pl-[3px]"><T w={rw}>{r}</T></div>
                </div>
              ))}
            </div>
            <VScroll thumb={14} className="mt-[28px] w-[30px]" />
          </div>
        </div>
        <div className="ml-[20px] flex w-[119px] flex-col gap-[7px]">
          {opGroups.map((g, gi) => (
            <div key={gi} className="flex flex-col">
              {g.map(([a, b], i) => (
                <div key={i} className="flex gap-[1px]">
                  <Op l={a[0]} tw={a[1]} w={60} h={gi === 1 ? 27 : 26.600} />
                  <Op l={b[0]} tw={b[1]} w={58} h={gi === 1 ? 27 : 26.600} />
                </div>
              ))}
              {gi === 2 && <div className="flex justify-center"><Op l="()" tw={20} w={60} h={27} /></div>}
            </div>
          ))}
        </div>
        <div className="ml-[20px] w-[465px]">
          <div className="flex">
            <div className={BTN + "h-[35px] w-[43px]"}><UpArrow /></div>
            <div className={BTN + "ml-[2px] h-[35px] w-[43px]"}>
              <Pic className="h-[24px] w-[34px]" vb="0 0 34 24"><path d="M23 7h9v16h-9z" fill="#8cc4f0" stroke="#000" strokeWidth="2" /><path d="M24 12h7M24 15h7M24 18h7" stroke="#2a70b8" /><path d="M1 4l2-1v6M18 1h-6v3h5v4h-5M7 11h6v3H9M13 14v4H7" fill="none" stroke="#f40000" strokeWidth="1.700" /></Pic>
            </div>
            <Combo tw={65}>Fields</Combo>
          </div>
          <div className="flex h-[251px] border-2 border-[#1268bd] bg-[#e4effb] p-[2px]">
            <div className="h-[245px] w-[426px] overflow-hidden">
              <div className="flex h-[28px] gap-[1px] bg-white">
                <Head w={62} tw={50}>Type</Head>
                <Head w={182} tw={53} extra={<i className="ml-[8px] h-[5px] w-[19px] border border-white border-l-[#999] border-t-[#999]" />}>Field</Head>
                <Head w={179} tw={84}>Storage</Head>
              </div>
              {fields.map(([f, w, k], i) => (
                <div key={f} className={"flex items-start overflow-hidden border-b border-[#a9c8ea] " + (i ? "bg-white" : "bg-[#ffe48c]")} style={{ height: rowH(i) }}>
                  <div className="flex h-[22px] w-[63px] items-center border-r-2 border-[#b5cfeb] pl-[2px]"><TypeIcon k={k} /></div>
                  <div className="flex h-[22px] w-[183px] items-center border-r-2 border-[#b5cfeb] pl-[3px]"><T w={w}>{f}</T></div>
                  <div className="flex h-[22px] items-center pl-[3px]"><T w={k === "r" ? 50 : 62}>{k === "r" ? "Real" : "String"}</T></div>
                </div>
              ))}
            </div>
            <VScroll thumb={105} className="mt-[28px] w-[30px]" />
          </div>
        </div>
      </div>
      <div className="pl-[20px] pt-[17px]">
        <T w={184} className="font-bold">is_integer(ITEM)</T>
        <T w={898} className="mt-[7px]">Returns a value of true if ITEM type is an integer. Otherwise, returns a value of false.</T>
      </div>
      <div className="mt-[44px] flex h-[20px] items-center pl-[21px]">
        <Pic className="h-[19px] w-[26px]"><path d="M1 1h30v30H1z" fill="#d8dae4" stroke="#fff" strokeWidth="2" /><path d="M3 30V3h27v27z" fill="none" stroke="#666" strokeWidth="2" /><path d="M9 14l4 9L26 6" fill="none" stroke="#1a1a6a" strokeWidth="4" /></Pic>
        <T w={348} className="ml-[11px]"><U>C</U>heck expression before saving</T>
      </div>
      <div className="mt-[9px] flex pl-[9px] pr-[10px]">
        <div className={BTN + "h-[34px] w-[133px]"}><T w={34}>OK</T></div>
        <div className={BTN + "ml-[10px] h-[34px] w-[133px]"}><T w={76}>Cancel</T></div>
        <div className={BTN + "ml-auto h-[34px] w-[133px]"}>
          <Pic className="h-[21px] w-[30px]"><path d="M0 21l7-4 5 4 6-17 10-3-9 28-17 3z" fill="#6a1ea0" /><path d="M19 3 30 0 25 18l-9 2z" fill="#9a60c8" /></Pic>
          <T w={69} className="ml-[8px]">Ch<U>e</U>ck</T>
        </div>
        <div className={BTN + "ml-[9px] h-[34px] w-[133px]"}><T w={51}>Help</T></div>
      </div>
    </div>
  );
}

/* ---------- taskbar ---------- */
const office = (color, l) => (
  <g>
    <path d="M14 4h17v24H14z" fill="#fff" stroke={color} strokeWidth="1.500" />
    <path d="M20 9h9M20 13h9M20 17h9M20 21h9" stroke={color} strokeWidth="2" />
    <path d="M0 4 19 0v32L0 28z" fill={color} />
    <text x="4" y="22" textLength="11" lengthAdjust="spacingAndGlyphs" fontFamily="Liberation Sans" fontWeight="700" fontSize="16" fill="#fff">{l}</text>
  </g>
);
const apps = [
  { x: 32, w: 33, h: 23, el: <path d="M0 4 13 2.500v12.500H0zM15 2 32 0v15H15zM0 17h13v12.500L0 28zM15 17h17v15L15 30z" fill="#fff" /> },
  { x: 128, w: 33, h: 23, el: <g fill="none" stroke="#fff" strokeWidth="2.500"><circle cx="21" cy="11" r="10" /><path d="M14 18 1 31" /></g> },
  { x: 225, w: 29, h: 22, el: <circle cx="16" cy="16" r="13.500" fill="none" stroke="#fff" strokeWidth="4" /> },
  { x: 318, w: 33, h: 22, el: <path d="M2 0v4h20V0M2 32v-4h20v4M2 9h20v14H2zM29 0v4M29 17v15M29 8v5" fill="none" stroke="#fff" strokeWidth="2.800" /> },
  { x: 408, w: 46, h: 31, el: office("#d14424", "P") },
  { x: 499, w: 44, h: 31, el: office("#2b579a", "W") },
  { x: 588, w: 45, h: 31, el: office("#217346", "X") },
  { x: 678, w: 44, h: 32, el: <g><path d="M2 12 6 5l3 4c3-3 8-4 10-4l1-5c3 3 4 5 6 9 8 10 5 23-10 23S-1 20 2 12z" fill="url(#fox)" /><circle cx="16" cy="18" r="7" fill="#6a3cc8" /><path d="M6 10c4-2 9-1 12 3-4-1-6 1-6 3s3 3 6 2c-4 5-12 2-12-8z" fill="#ff9a1c" /></g> },
  { x: 768, w: 44, h: 32, el: <g><rect width="32" height="32" rx="9" fill="#4087fc" /><path d="M6 11h13v10H6zM20 14l6-3v10l-6-3z" fill="#fff" stroke="#fff" /></g> },
  { x: 857, w: 44, h: 25, el: <g><path d="M0 1h12l3 4H0z" fill="#d99a14" /><path d="M0 5h32v26H0z" fill="#ffd862" /><path d="M6 31V18h20v13h-6v-7h-8v7z" fill="#3a96dd" /></g> },
  { x: 946, w: 46, h: 33, ul: [933, 71], icon: "spotify" },
  { x: 1036, w: 43, h: 30, el: <g><path d="M0 0h32v32H0z" fill="#161616" /><path d="M4 22h6v3H4z" fill="#f07020" /><path d="M10 14h5v3h-5zM10 18h5v3h-5z" fill="#f0a020" /><path d="M10 22h5v3h-5z" fill="#e04060" /><path d="M17 22h5v3h-5z" fill="#c03080" /><path d="M24 8h6v3h-6zM24 12h6v3h-6z" fill="#20a060" /><path d="M24 16h6v4h-6z" fill="#2090c0" /><path d="M24 21h6v4h-6z" fill="#3060e0" /></g> },
  { x: 1126, w: 49, h: 34, ul: [1112, 71], el: <g><circle cx="14" cy="14" r="14" fill="#fbc116" /><path d="M14 14 2 7C8-3 22-2 26 7H14z" fill="#ea4335" /><path d="M2 7C-3 16 3 27 13 28l5-11-8-1z" fill="#34a853" /><circle cx="14" cy="14" r="6.500" fill="#fff" /><circle cx="14" cy="14" r="5" fill="#3c7cf0" /><circle cx="22" cy="23" r="9" fill="#44586a" /><text x="18.500" y="28" fontFamily="Liberation Sans" fontSize="12" fill="#fff">Z</text></g> },
  { x: 1212, w: 46, h: 31, el: <g><path d="M0 18 10 13 22 0c4 8 7 18 10 24-4-2-7-1-10 2l-6 6-3-8-6-3z" fill="url(#mat)" /><path d="M0 18l10-5 4 3-7 6z" fill="#4a9ad0" /></g> },
  { x: 1298, w: 49, h: 32, el: <g><path d="M23 0v9L4 24l-4-3zM23 32v-9L4 8l-4 3z" fill="#1e8ad6" /><path d="M23 0l9 4v24l-9 4z" fill="#2ba3f2" /></g> },
  { x: 1388, w: 44, h: 32, icon: "whatsapp" },
  { x: 1477, w: 41, h: 32, icon: "brave" },
  { x: 1561, w: 47, h: 31, el: <g><circle cx="14" cy="16" r="14.500" fill="#f7941e" /><circle cx="18" cy="16" r="15" fill="#1e1e1e" /><circle cx="18" cy="16" r="13.500" fill="#2c2255" /><path d="M4 11h28v2.500H4zM4 15h28v2.500H4zM4 19h28v2.500H4z" fill="#fff" /></g> },
  { x: 1655, w: 33, h: 30, el: <g><path d="M1 1h21l9 6v24H1z" fill="#f4f4f4" stroke="#aaa" /><path d="M22 1v6h9" fill="none" stroke="#888" strokeWidth="1.500" /></g> },
  { x: 1735, w: 48, h: 33, el: <g><circle cx="16" cy="16" r="16" fill="#ff0000" /><circle cx="16" cy="16" r="9.500" fill="none" stroke="#fff" strokeWidth="1.800" /><path d="M13 11l8 5-8 5z" fill="#fff" /></g> },
  { x: 1824, w: 46, h: 32, hl: true, ul: [1805, 85], icon: "spss" },
  { x: 1908, w: 50, h: 33, ul: [1900, 70], el: <g><path d="M2 14C6 2 24 2 28 12c2 10-6 18-14 17-5 0-3-6-7-7-4 1-7-2-5-8z" fill="#9ed3f0" /><circle cx="12" cy="11" r="2.800" fill="#4ab04a" /><circle cx="19" cy="8" r="2.800" fill="#f0b020" /><circle cx="7" cy="17" r="2.800" fill="#e04040" /><circle cx="14" cy="19" r="2.500" fill="#234" /><path d="M19 31 28 5l3 1-9 26z" fill="#e88420" /><path d="M26 0h5l1 5-3 3-4-2z" fill="#a86a38" /></g> },
  { x: 2036, w: 35, h: 27, el: <circle cx="16" cy="16" r="16" fill="url(#sun)" /> },
];

function Taskbar() {
  let pos = 0;
  return (
    <div className="flex h-[57px] w-[2715px] bg-[#1e1e1e] font-['Open_Sans',sans-serif] text-[17px] text-white">
      {apps.map((a, i) => {
        const [sx, sw] = a.ul || [a.x, a.w];
        const ml = sx - pos;
        pos = sx + sw;
        return (
          <div key={i} className={"flex shrink-0 flex-col items-start justify-center border-b-[3px] " + (a.ul ? "border-[#e994f5] " : "border-transparent ") + (a.hl ? "bg-[#5c5c5c]" : "")} style={{ marginLeft: ml, width: sw }}>
            <div className="shrink-0" style={{ width: a.w, height: a.h, marginLeft: a.x - sx }}>
              {a.el && <Pic className="h-full w-full">{a.el}</Pic>}
              {a.icon === "spotify" && <FaSpotify preserveAspectRatio="none" className="h-full w-full text-[#1ed760]" />}
              {a.icon === "whatsapp" && (
                <div className="h-full w-full rounded-full bg-white p-[1px]"><FaWhatsapp preserveAspectRatio="none" className="h-full w-full rounded-full bg-[#2fd152] text-white" /></div>
              )}
              {a.icon === "brave" && <SiBrave preserveAspectRatio="none" className="h-full w-full rounded-[14px] bg-[radial-gradient(closest-side,#fff_75%,transparent_76%)] text-[#ff4a12]" />}
              {a.icon === "spss" && <Diamond className="h-full w-full" />}
            </div>
          </div>
        );
      })}
      <div className="flex items-center pt-[2px]">
        <T w={58} className="ml-[22px] text-[18px]">32°C</T>
        <Pic className="ml-[36px] h-[10px] w-[23px]"><path d="M1 31 16 3l15 28" fill="none" stroke="#fff" strokeWidth="3.500" /></Pic>
        <Pic className="ml-[26px] h-[23px] w-[23px]" vb="0 0 23 23"><g fill="none" stroke="#fff" strokeWidth="1.500"><path d="M1 6h15v11H1zM16 10l5-3v9l-5-3M5 2c4-2 9-2 13 0M5 21c4 2 9 2 13 0" /><ellipse cx="8.500" cy="11.500" rx="3" ry="2.500" /></g></Pic>
        <Pic className="ml-[19px] h-[18px] w-[32px]" vb="0 0 32 18"><g fill="none" stroke="#fff" strokeWidth="1.500"><path d="M3 0v4M9 0v4M1 4h10v3c0 2-10 2-10 0zM6 8v9" /><path d="M14 4h15v12H9M29 8h3v4h-3" stroke="#999" /><path d="M14 7l8 6M22 7l-8 6" strokeWidth="2" /></g></Pic>
        <Pic className="ml-[22px] h-[18px] w-[25px]" vb="0 0 25 18"><g fill="none" stroke="#ccc" strokeWidth="1.500"><path d="M1 17C2 8 11 1 24 1M6 17c1-7 8-12 18-12M11 17c1-4 6-8 13-8M17 17c0-2 3-4 7-4" /></g><circle cx="22.500" cy="15.500" r="2" fill="#fff" /></Pic>
        <Pic className="ml-[16px] h-[20px] w-[33px]" vb="0 0 33 20"><g fill="none" stroke="#fff" strokeWidth="1.500"><path d="M1 7h5l6-5v16l-6-5H1zM17 7c2 2 2 4 0 6M22 5c3 3 3 7 0 10M27 2c5 5 5 11 0 16" /></g></Pic>
        <T w={46} className="ml-[20px]">ENG</T>
      </div>
      <div className="ml-[23px] flex w-[104px] flex-col items-center justify-center gap-[7px] text-[17px]">
        <T w={89} className="font-['Open_Sans','DejaVu_Sans',sans-serif]">11:46 ص</T>
        <T w={104} className="font-['DejaVu_Sans',sans-serif] text-[15px]">٢٠٢٢/٠٥/٢٠</T>
      </div>
      <Pic className="ml-[36px] mt-[16px] h-[24px] w-[32px]" vb="0 0 32 24"><path d="M1 2h30v16H20l-4 4-4-4H1z" fill="none" stroke="#fff" strokeWidth="2" /></Pic>
      <i className="ml-auto mr-[8px] h-full w-px bg-[#777]" />
    </div>
  );
}

const menus = [[<><U>F</U>ile</>, 39], [<><U>E</U>dit</>, 43], [<><U>I</U>nsert</>, 61], [<><U>V</U>iew</>, 52], [<><U>T</U>ools</>, 59], [<><U>S</U>uperNode</>, 124], [<>E<U>x</U>tensions</>, 120], [<><U>W</U>indow</>, 87], [<><U>H</U>elp</>, 52]];

const rings = [[337, 599, 179, 79], [885, 631, 184, 92], [70, 891, 147, 95], [1209, 745, 160, 93], [2100, 719, 161, 124]];

export default function App() {
  return (
    <div className="relative h-[1112px] w-[2720px] overflow-hidden bg-white text-black">
      <Defs />
      <div className="flex w-[2715px] flex-col">
        <div className="flex h-[34px] items-center pl-[5px] font-['Open_Sans',sans-serif] text-[17px] text-[#999]">
          <Logo className="h-[23px] w-[32px]" />
          <T w={509} className="ml-[11px]">Credit Approval project* - IBM® SPSS® Modeler</T>
          <Pic className="ml-auto mb-[2px] h-[16px] w-[200px]" vb="0 0 200 16">
            <g fill="none" stroke="#929292" strokeWidth="1.500"><path d="M0 8h19M89 5h14v9H89zM93 5V2h15v9h-5M180 1l20 14M200 1l-20 14" /></g>
          </Pic>
          <div className="w-[40px]" />
        </div>
        <div className={UI + "flex h-[35px] items-center gap-[41px] bg-[#cde0f1] pl-[13px] pt-[1px]"}>
          {menus.map(([l, w], i) => <T key={i} w={w}>{l}</T>)}
        </div>
        <div className="flex h-[727px] bg-[#e2eefb]">
          <div className="flex w-[2277px] flex-col">
            <Toolbar />
            <div className="mt-[3px] flex h-[639px] pl-[5px]">
              <Canvas />
              <VScroll thumb={590} className="w-[30px]" />
            </div>
            <div className="ml-[5px] flex h-[21px] w-[2269px] border-b-[3px] border-l-2 border-t-2 border-b-[#0b4a86] border-l-[#2196f8] border-t-[#2196f8]">
              <div className={SB + "w-[28px] border-r-2 border-[#5fa8f2]"}><Tri d="left" className="!h-[11px] !w-[10px]" /></div>
              <div className="flex-1 bg-gradient-to-b from-[#78b0de] to-[#3878b8]" />
            </div>
          </div>
          <div className="flex w-[9px] flex-col gap-[8px] border-l-2 border-r-4 border-l-[#cdeeff] border-r-[#7897bd] bg-[#99c9ff] pt-[5px]">
            <Tri d="left" className="!h-[9px] !w-[8px]" /><Tri d="right" className="!h-[10px] !w-[8px]" />
          </div>
          <SideColumn />
        </div>
        <Palette />
        <StatusBar />
        <Taskbar />
      </div>
      <SelectDialog />
      <ExpressionBuilder />
      {rings.map(([x, y, w, h], i) => (
        <div key={i} className="absolute z-30 rounded-[50%] border-[5px] border-[#ed1c24]" style={{ left: x, top: y, width: w, height: h }} />
      ))}
    </div>
  );
}
